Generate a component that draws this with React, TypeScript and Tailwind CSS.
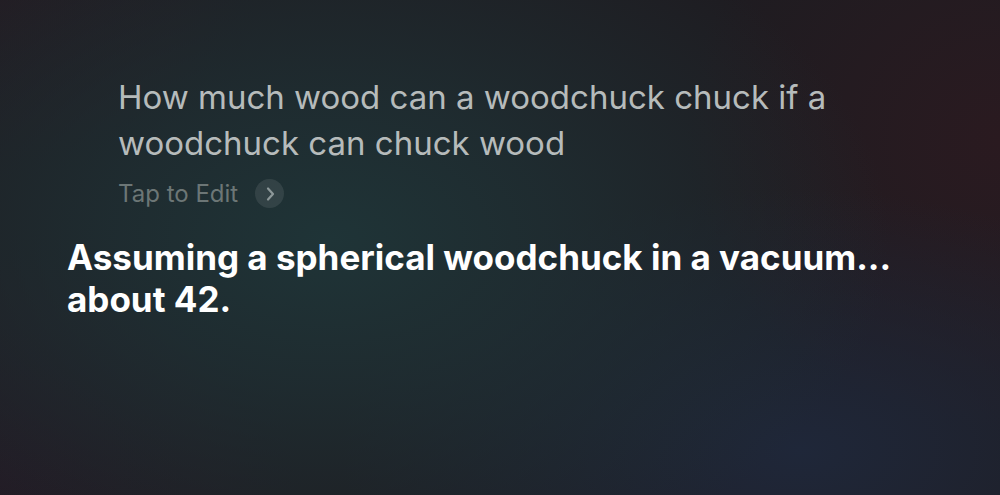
import React from "react";

export default function App() {
  return (
    <div className="w-[1000px] h-[495px] overflow-hidden bg-[#1e1c21] bg-[radial-gradient(ellipse_560px_360px_at_330px_240px,#1f3437_0%,rgba(31,50,54,0.7)_40%,transparent_100%),radial-gradient(ellipse_460px_260px_at_800px_450px,#1f2739_0%,transparent_100%),radial-gradient(ellipse_320px_300px_at_1000px_140px,#2a1a20_0%,transparent_100%),radial-gradient(ellipse_300px_250px_at_0px_480px,#231a24_0%,transparent_100%),radial-gradient(ellipse_260px_180px_at_0px_0px,#231b22_0%,transparent_100%)] font-['Inter','Liberation_Sans',sans-serif]">
      <div className="pt-[74px] pl-[118px] flex flex-col">
        <p className="text-[33px] leading-[46px] text-[#b6bbbb] tracking-[0px] w-[760px]">
          How much wood can a woodchuck chuck if a woodchuck can chuck wood
        </p>
        <div className="flex items-center gap-[17px] mt-[13px]">
          <span className="text-[24px] leading-[28px] text-[#6c7676]">Tap to Edit</span>
          <span className="w-[29px] h-[29px] rounded-full bg-[#ffffff17] flex items-center justify-center">
            <svg width="14" height="16" viewBox="0 0 14 16" fill="none">
              <path d="M5 2.5 L10 8 L5 13.5" stroke="#8d9899" strokeWidth="2.2" strokeLinecap="round" strokeLinejoin="round" />
            </svg>
          </span>
        </div>
      </div>
      <p className="pl-[67px] mt-[28px] text-[35px] leading-[42px] font-bold text-white tracking-[0px] w-[950px]">
        Assuming a spherical woodchuck in a vacuum...
        <br />
        about 42.
      </p>
    </div>
  );
}
